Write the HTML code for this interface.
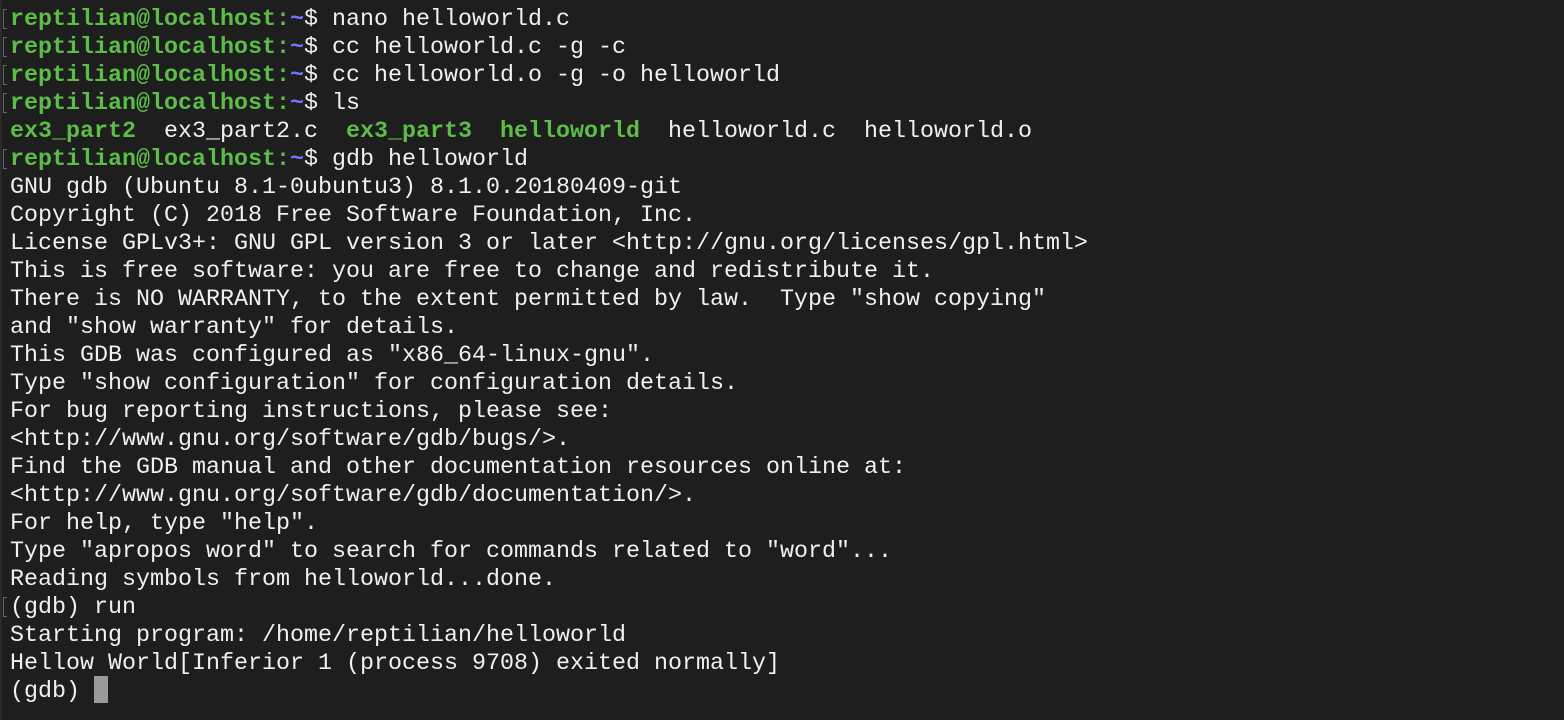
<!DOCTYPE html>
<html><head><meta charset="utf-8"><style>
html,body{margin:0;padding:0;background:#1e1e1e;width:1564px;height:720px;overflow:hidden}
#t{position:absolute;left:10px;top:-22px;font-family:"Liberation Mono",monospace;font-size:23.33px;line-height:28px;color:#f0f0f0;white-space:pre}
.g{color:#5cbd47;font-weight:bold}
.b{color:#7474ff;font-weight:bold}
.m{position:absolute;left:3px;width:3px;height:18px;border:1px solid #666;border-right:none}
#c{position:absolute;left:94px;top:676px;width:14px;height:27px;background:#9a9a9a}
#l{position:absolute;left:0;top:0;width:2px;height:720px;background:#2a2a2a}
</style></head><body>
<div id="l"></div>
<div class="m" style="top:9px"></div>
<div class="m" style="top:37px"></div>
<div class="m" style="top:65px"></div>
<div class="m" style="top:93px"></div>
<div class="m" style="top:149px"></div>
<div class="m" style="top:597px"></div>
<div id="t"><span class="g">                                         </span>
<span class="g">reptilian@localhost:</span><span class="b">~</span>$ nano helloworld.c
<span class="g">reptilian@localhost:</span><span class="b">~</span>$ cc helloworld.c -g -c
<span class="g">reptilian@localhost:</span><span class="b">~</span>$ cc helloworld.o -g -o helloworld
<span class="g">reptilian@localhost:</span><span class="b">~</span>$ ls
<span class="g">ex3_part2</span>  ex3_part2.c  <span class="g">ex3_part3</span>  <span class="g">helloworld</span>  helloworld.c  helloworld.o
<span class="g">reptilian@localhost:</span><span class="b">~</span>$ gdb helloworld
GNU gdb (Ubuntu 8.1-0ubuntu3) 8.1.0.20180409-git
Copyright (C) 2018 Free Software Foundation, Inc.
License GPLv3+: GNU GPL version 3 or later &lt;http://gnu.org/licenses/gpl.html&gt;
This is free software: you are free to change and redistribute it.
There is NO WARRANTY, to the extent permitted by law.  Type "show copying"
and "show warranty" for details.
This GDB was configured as "x86_64-linux-gnu".
Type "show configuration" for configuration details.
For bug reporting instructions, please see:
&lt;http://www.gnu.org/software/gdb/bugs/&gt;.
Find the GDB manual and other documentation resources online at:
&lt;http://www.gnu.org/software/gdb/documentation/&gt;.
For help, type "help".
Type "apropos word" to search for commands related to "word"...
Reading symbols from helloworld...done.
(gdb) run
Starting program: /home/reptilian/helloworld
Hellow World[Inferior 1 (process 9708) exited normally]
(gdb) </div>
<div id="c"></div>
</body></html>
